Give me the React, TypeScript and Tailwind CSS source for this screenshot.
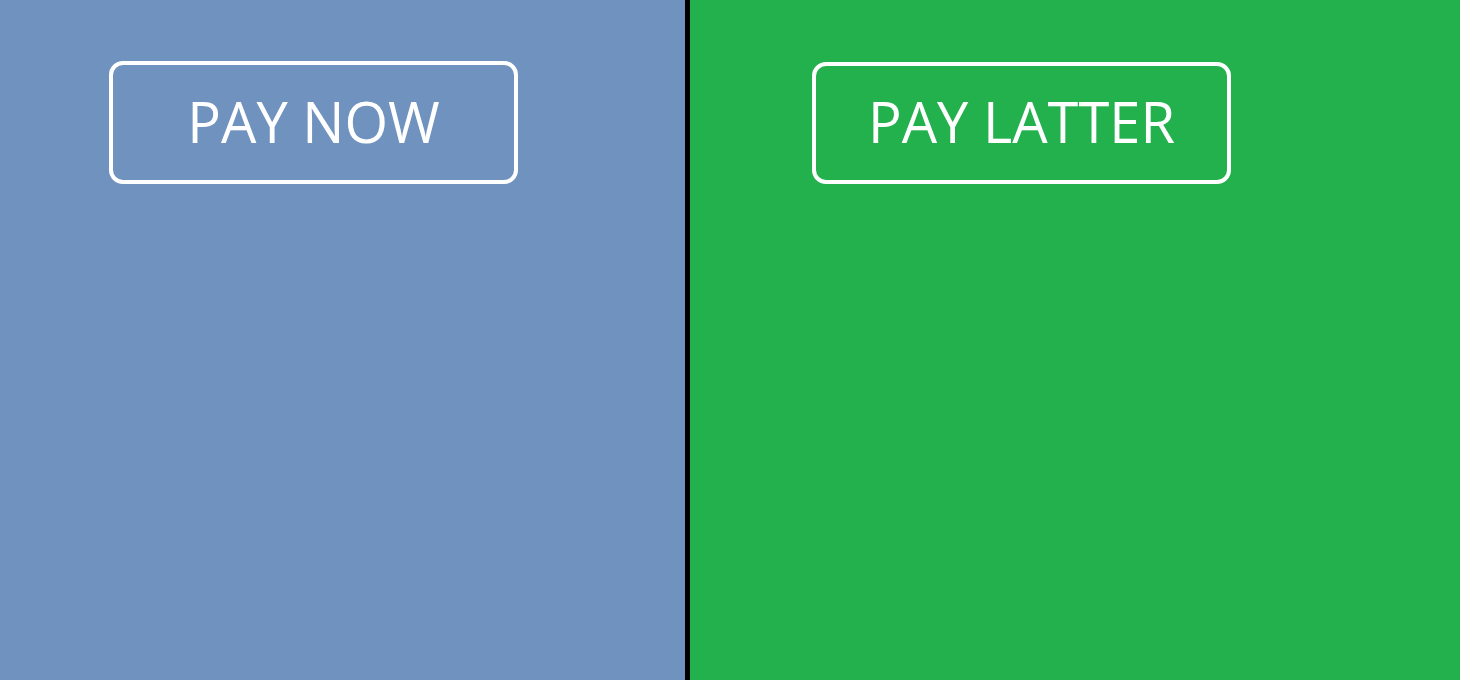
const App = () => {
  return (
    <div className="flex h-[680px] w-full font-['Open_Sans',sans-serif]">
      <div className="w-[685px] shrink-0 bg-[#7092be] pl-[109px] pt-[61px]">
        <button className="flex h-[123px] w-[409px] items-center justify-center rounded-[14px] border-4 border-white pb-[4px] text-[56px] leading-none text-white">
          PAY NOW
        </button>
      </div>
      <div className="w-[5px] shrink-0 bg-black" />
      <div className="flex-1 bg-[#22b14c] pl-[122px] pt-[62px]">
        <button className="flex h-[122px] w-[419px] items-center justify-center rounded-[14px] border-4 border-white pb-[4px] text-[56px] leading-none text-white">
          PAY LATTER
        </button>
      </div>
    </div>
  );
};

export default App;
